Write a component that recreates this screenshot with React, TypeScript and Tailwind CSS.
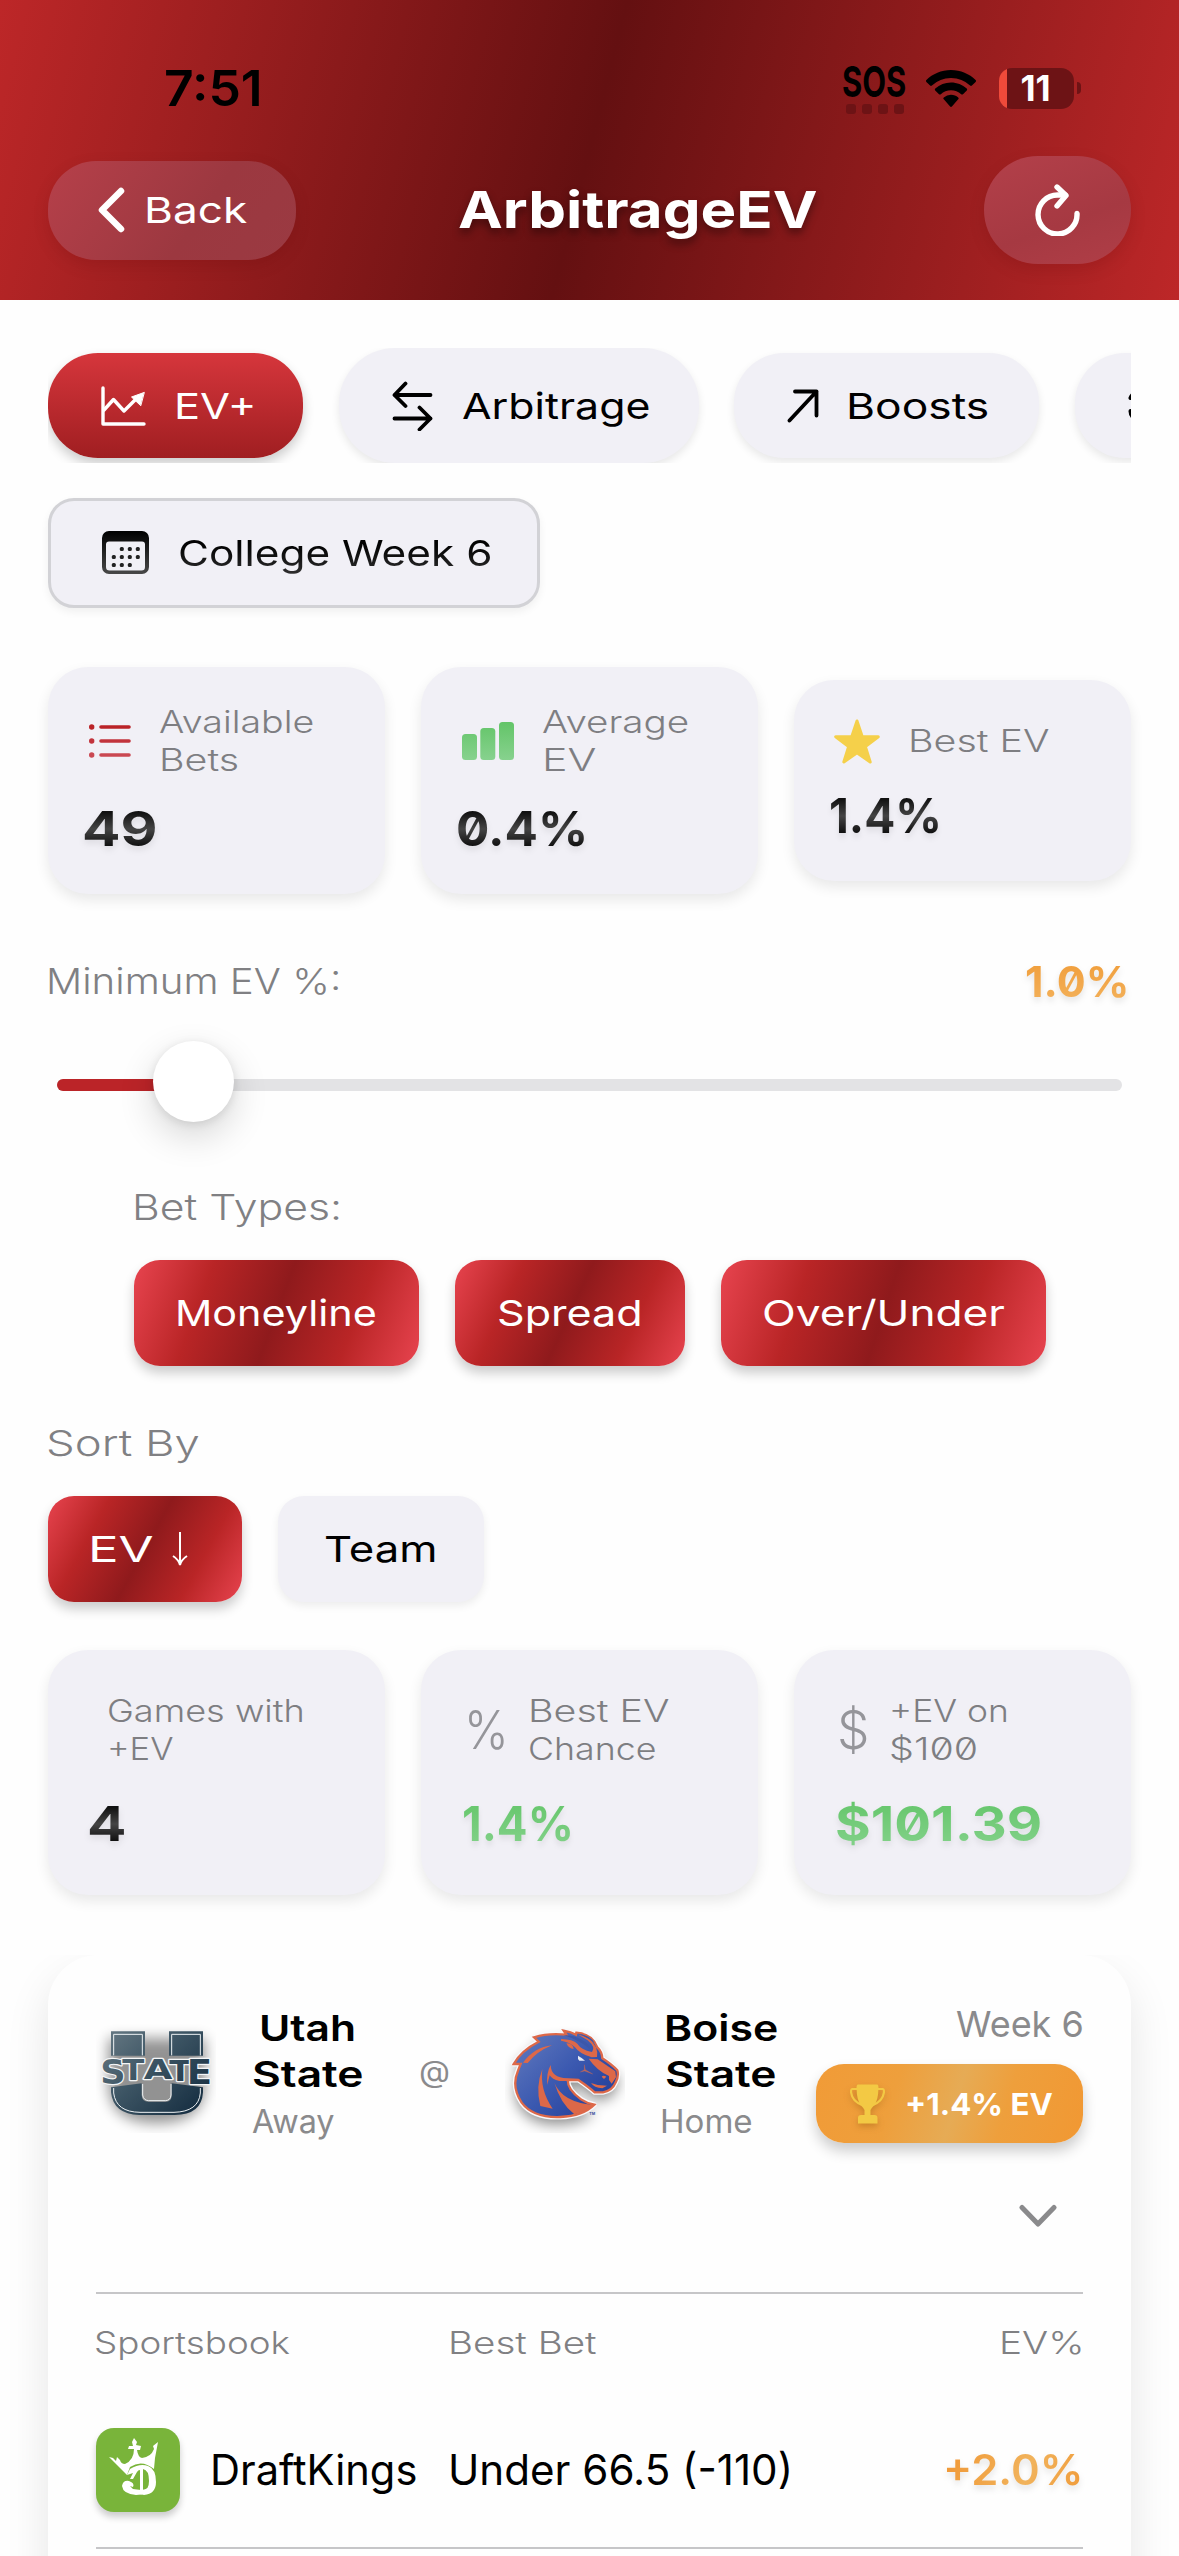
import React, { useLayoutEffect, useRef, useState } from "react";
import clsx from "clsx";

/* A single line of text stretched horizontally so that its glyphs fill the box;
   the extra pixels make up for the side bearings of the outer glyphs. */
function Wide({ box, text = "", children }: { box: string; text?: string; children: React.ReactNode }) {
  const outer = useRef<HTMLSpanElement>(null);
  const inner = useRef<HTMLSpanElement>(null);
  const [scale, setScale] = useState(1);
  useLayoutEffect(() => {
    if (outer.current && inner.current) {
      setScale((outer.current.offsetWidth + 3) / inner.current.offsetWidth);
    }
  }, []);
  return (
    <span ref={outer} className={clsx("block shrink-0 whitespace-nowrap", box)}>
      <span
        ref={inner}
        className={clsx("inline-block origin-left align-top", text)}
        style={{ transform: `translateX(-2px) scaleX(${scale})` }}
      >
        {children}
      </span>
    </span>
  );
}

function StatusBar() {
  return (
    <div className="flex h-[60px] items-center pl-[166px] pr-[98px] text-black">
      <Wide box="w-[96px] text-[50px] leading-[60px] font-semibold">7:51</Wide>
      <div className="ml-auto flex items-center">
        <div className="flex w-[61px] flex-col items-center">
          <Wide box="w-[61px] text-[43px] leading-[38px] font-bold">SOS</Wide>
          <div className="mt-[4px] flex gap-[6px]">
            {[0, 1, 2, 3].map((i) => (
              <span key={i} className="h-[10px] w-[10px] rounded-[3px] bg-[#6d1315]" />
            ))}
          </div>
        </div>
        <svg className="ml-[21px] h-[37px] w-[50px]" viewBox="0 0 50 37" fill="black">
          <path d="M25 0C34.600 0 43.400 3.800 49.600 10.100a1.300 1.300 0 0 1 0 1.800L45.900 15.600a1.300 1.300 0 0 1-1.800 0A27.500 27.500 0 0 0 25 8 27.500 27.500 0 0 0 5.900 15.600a1.300 1.300 0 0 1-1.800 0L.4 11.900a1.300 1.300 0 0 1 0-1.800C6.600 3.800 15.400 0 25 0z" />
          <path d="M25 12.500c6 0 11.500 2.300 15.700 6.100.6.500.6 1.300.1 1.900L37 24.200c-.5.500-1.300.5-1.800 0A15.400 15.400 0 0 0 25 20.300c-3.900 0-7.500 1.500-10.200 3.900-.5.500-1.300.5-1.800 0l-3.800-3.700c-.5-.6-.5-1.400.1-1.900A23.300 23.300 0 0 1 25 12.500z" />
          <path d="M25 24.800c2.800 0 5.300 1 7.200 2.700.6.500.6 1.300 0 1.800l-6.300 7.200c-.5.500-1.300.5-1.800 0l-6.300-7.200c-.6-.5-.6-1.300 0-1.800a10.800 10.800 0 0 1 7.200-2.700z" />
        </svg>
        <div className="ml-[23px] flex h-[41px] w-[75px] items-center justify-center overflow-hidden rounded-[13px] bg-[linear-gradient(90deg,#f04a3a_8px,#6d1315_8px)]">
          <span className="-ml-[2px] text-[35px] leading-[40px] font-bold text-white">11</span>
        </div>
        <span className="ml-[3px] h-[12px] w-[4px] rounded-r-full bg-[#6d1315]" />
      </div>
    </div>
  );
}

function Header() {
  return (
    <header className="h-[300px] bg-[linear-gradient(104.3deg,#bd2728_0%,#641011_50%,#bd2728_100%)] pt-[58px]">
      <StatusBar />
      <div className="mt-[38px] flex h-[108px] items-center justify-between px-[48px]">
        <div className="flex h-[99px] w-[248px] items-center rounded-[48px] bg-[linear-gradient(125deg,#b6404a,#9c3840_60%,#9a3a42)] pl-[50px] shadow-[0_6px_16px_rgba(80,0,0,0.15)]">
          <svg className="h-[46px] w-[27px]" viewBox="0 0 27 46" fill="none" stroke="white" strokeWidth="6.500" strokeLinecap="round" strokeLinejoin="round">
            <path d="M23 4 4 23l19 19" />
          </svg>
          <Wide box="ml-[21px] w-[100px] text-[36px] leading-[44px] text-white">Back</Wide>
        </div>
        <div className="pr-[32px]">
          <Wide box="ml-[-26px] w-[357px] text-[51px] leading-[60px] font-bold text-white" text="[text-shadow:0_5px_8px_rgba(0,0,0,0.4)]">
            ArbitrageEV
          </Wide>
        </div>
        <div className="-ml-[55px] flex h-[108px] w-[147px] items-center justify-center rounded-[54px] bg-[linear-gradient(160deg,#b3404a,#a63942_60%,#b03e47)] shadow-[0_6px_16px_rgba(80,0,0,0.15)]">
          <svg className="h-[52px] w-[46px]" viewBox="0 0 46 52" fill="none" stroke="white" strokeWidth="5.400" strokeLinecap="round" strokeLinejoin="round">
            <path d="M42 29.500a19.500 19.500 0 1 1-19.500-18.500h7.500" />
            <path d="m22 3 9 8.500-9 10.500" />
          </svg>
        </div>
      </div>
    </header>
  );
}

const pill = "flex shrink-0 items-center pl-[53px] text-[36px] leading-[44px]";

function Tabs() {
  return (
    <div className="mt-[48px] flex h-[115px] items-center gap-[35.500px] overflow-hidden">
      <div className={clsx(pill, "h-[105px] w-[255px] rounded-[50px] bg-gradient-to-b from-[#d6363c] to-[#a01e21] text-white shadow-[0_6px_12px_rgba(0,0,0,0.2)]")}>
        <svg className="h-[40px] w-[45px]" viewBox="0 0 45 40" fill="none" stroke="white" strokeWidth="3.400" strokeLinecap="round" strokeLinejoin="round">
          <path d="M2 2v36h41" />
          <path d="M3 24l9.500-10.500L23 25l13-13" />
          <path d="M43 6.500 30.500 11l9 8.500z" fill="white" strokeWidth="1" />
        </svg>
        <Wide box="ml-[30px] w-[79px]">EV+</Wide>
      </div>
      <div className={clsx(pill, "h-[115px] w-[360px] rounded-[56px] bg-[#f1f0f6] shadow-[0_4px_8px_rgba(0,0,0,0.09)]")}>
        <svg className="h-[50px] w-[41px]" viewBox="0 0 41 50" fill="none" stroke="black" strokeWidth="3.800" strokeLinecap="round" strokeLinejoin="round">
          <path d="M38.500 14H2.500M13.500 2.500 2.500 14l11 11" />
          <path d="M2.500 37.500h36M27.500 26.500l11 11-11 11" />
        </svg>
        <Wide box="ml-[31px] w-[185px]">Arbitrage</Wide>
      </div>
      <div className={clsx(pill, "h-[105px] w-[305px] rounded-[50px] bg-[#f1f0f6] shadow-[0_4px_8px_rgba(0,0,0,0.09)]")}>
        <svg className="h-[34px] w-[32px]" viewBox="0 0 32 34" fill="none" stroke="black" strokeWidth="3.800" strokeLinecap="round" strokeLinejoin="round">
          <path d="M2.500 31.500 29.500 2.500M8 2.500h21.500v24" />
        </svg>
        <Wide box="ml-[29px] w-[140px]">Boosts</Wide>
      </div>
      <div className={clsx(pill, "h-[105px] w-[300px] rounded-[50px] bg-[#f1f0f6] shadow-[0_4px_8px_rgba(0,0,0,0.09)]")}>
        <svg className="h-[34px] w-[26px]" viewBox="0 0 26 34" fill="none" stroke="black" strokeWidth="4" strokeLinecap="round">
          <path d="M2.500 9a8 8 0 0 1 10-5M2.500 22a8 8 0 0 0 10 8" />
        </svg>
      </div>
    </div>
  );
}

const calendarDots = [
  [21, 18], [29, 18], [37, 18],
  [13, 26], [21, 26], [29, 26], [37, 26],
  [13, 34], [21, 34], [29, 34],
];

function WeekButton() {
  return (
    <div className="mt-[35px] flex h-[110px] w-[492px] items-center rounded-[26px] border-[3px] border-[#d2d2d6] bg-[#f1f0f6] pb-[1px] pl-[51px] shadow-[0_4px_8px_rgba(0,0,0,0.06)]">
      <svg className="h-[44px] w-[47px]" viewBox="0 0 47 44">
        <defs>
          <linearGradient id="cal" x1="0" y1="0" x2="0" y2="1">
            <stop offset="0" stopColor="#000" />
            <stop offset="1" stopColor="#484848" />
          </linearGradient>
        </defs>
        <path fillRule="evenodd" fill="url(#cal)" d="M7 0h33a7 7 0 0 1 7 7v29a7 7 0 0 1-7 7H7a7 7 0 0 1-7-7V7a7 7 0 0 1 7-7zM7 10.500a3 3 0 0 0-3 3V36a3.500 3.500 0 0 0 3.500 3.500h32A3.500 3.500 0 0 0 43 36V13.500a3 3 0 0 0-3-3z" />
        {calendarDots.map(([x, y]) => (
          <rect key={`${x}-${y}`} x={x - 3.2} y={y - 2} width="4" height="4" rx="1.500" fill="#222" />
        ))}
      </svg>
      <Wide box="ml-[31px] w-[311px] text-[36px] leading-[46px]" text="bg-gradient-to-b from-black to-[#333] bg-clip-text text-transparent">
        College Week 6
      </Wide>
    </div>
  );
}

const card = "flex w-[337px] flex-col bg-[#f1f0f6] rounded-[40px] shadow-[0_6px_14px_rgba(0,0,0,0.09)]";
const darkValue = "bg-[linear-gradient(180deg,#111_20%,#444_50%,#111_80%)] bg-clip-text text-transparent drop-shadow-[0_4px_3px_rgba(0,0,0,0.08)]";
const greenValue = "bg-gradient-to-b from-[#62c568] to-[#85d28c] bg-clip-text text-transparent drop-shadow-[0_4px_3px_rgba(0,0,0,0.08)]";
const labelText = "text-[31px] leading-[38px] font-light text-[#7e7e82]";
const valueText = "text-[48px] leading-[56px] font-bold";

function SummaryCards() {
  return (
    <div className="mt-[59px] flex h-[227px] items-center gap-[36px]">
      <div className={clsx(card, "h-[227px] pt-[36px]")}>
        <div className="flex h-[76px] items-center pl-[41px]">
          <svg className="h-[36px] w-[42px]" viewBox="0 0 42 36" strokeLinecap="round" strokeWidth="3.600">
            <path d="M12 4h28" stroke="#ba2227" />
            <path d="M12 18h28" stroke="#c2333c" />
            <path d="M12 32h28" stroke="#ca4852" />
            <circle cx="2.700" cy="4" r="2.700" fill="#ba2227" />
            <circle cx="2.700" cy="18" r="2.700" fill="#c2333c" />
            <circle cx="2.700" cy="32" r="2.700" fill="#ca4852" />
          </svg>
          <div className={clsx("ml-[30px]", labelText)}>
            <Wide box="w-[152px]">Available</Wide>
            <Wide box="w-[77px]">Bets</Wide>
          </div>
        </div>
        <Wide box={clsx("ml-[36px] mt-[22px] w-[73px]", valueText)} text={darkValue}>49</Wide>
      </div>
      <div className={clsx(card, "h-[227px] pt-[36px]")}>
        <div className="flex h-[76px] items-center pl-[41px]">
          <svg className="h-[40px] w-[52px]" viewBox="0 0 52 40">
            <defs>
              <linearGradient id="bars" gradientUnits="userSpaceOnUse" x1="0" y1="0" x2="0" y2="40">
                <stop offset="0" stopColor="#62c467" />
                <stop offset="1" stopColor="#88d28f" />
              </linearGradient>
            </defs>
            <g fill="url(#bars)">
              <rect x="0" y="13" width="15" height="26" rx="3.500" />
              <rect x="18.300" y="7" width="15" height="32" rx="3.500" />
              <rect x="37" y="1" width="15" height="38" rx="3.500" />
            </g>
          </svg>
          <div className={clsx("ml-[30px]", labelText)}>
            <Wide box="w-[144px]">Average</Wide>
            <Wide box="w-[51px]">EV</Wide>
          </div>
        </div>
        <Wide box={clsx("ml-[37px] mt-[22px] w-[129px]", valueText)} text={clsx(darkValue, "slashed-zero")}>0.4%</Wide>
      </div>
      <div className={clsx(card, "h-[201px] pt-[29px]")}>
        <div className="flex h-[64px] items-center pl-[40px]">
          <svg className="h-[45px] w-[46px]" viewBox="0 0 46 45" fill="#f5d04a" stroke="#f5d04a" strokeWidth="3" strokeLinejoin="round">
            <path d="M23 2l5.200 15.500 16.100.2-12.900 9.900 4.800 15.400L23 33.700 9.800 43l4.800-15.400L1.700 17.700l16.100-.2z" />
          </svg>
          <Wide box={clsx("ml-[30px] w-[138px]", labelText)}>Best EV</Wide>
        </div>
        <Wide box={clsx("ml-[37px] mt-[15px] w-[110px] self-start", valueText)} text={darkValue}>1.4%</Wide>
      </div>
    </div>
  );
}

function MinimumSlider() {
  return (
    <>
      <div className="mt-[64px] flex h-[46px] items-center justify-between pr-[3px]">
        <Wide box="w-[292px] text-[36px] leading-[46px] font-light text-[#808083]">Minimum EV %:</Wide>
        <Wide box="w-[101px] text-[43px] leading-[50px] font-bold" text="slashed-zero bg-gradient-to-b from-[#f09c36] to-[#f3b25c] bg-clip-text text-transparent drop-shadow-[0_4px_3px_rgba(0,0,0,0.1)]">
          1.0%
        </Wide>
      </div>
      <div className="mt-[37px] flex h-[81px] items-center px-[9px]">
        <div className="mt-[6px] flex h-[12px] w-full items-center rounded-full bg-[#e3e3e5]">
          <div className="h-[12px] w-[110px] rounded-l-full bg-[#bb2428]" />
          <div className="-ml-[14px] -mt-[6px] h-[81px] w-[81px] rounded-full bg-white shadow-[0_14px_36px_rgba(0,0,0,0.16),0_2px_10px_rgba(0,0,0,0.1)]" />
        </div>
      </div>
    </>
  );
}

const shiny = "flex h-[106px] items-center justify-center rounded-[26px] text-[36px] leading-[46px] text-white shadow-[0_7px_12px_rgba(0,0,0,0.2)]";

function Filters() {
  return (
    <>
      <div className="mt-[63px] pl-[86px]">
        <Wide box="w-[207px] text-[36px] leading-[44px] font-light text-[#808083]">Bet Types:</Wide>
        <div className="mt-[31px] flex gap-[36px]">
          <div className={clsx(shiny, "w-[285px] bg-[linear-gradient(110.400deg,#e8444f_0%,#b92526_25%,#8f1a1c_50%,#b92526_75%,#e8444f_100%)]")}>
            <Wide box="w-[199px]">Moneyline</Wide>
          </div>
          <div className={clsx(shiny, "w-[230px] bg-[linear-gradient(114.700deg,#e8444f_0%,#b92526_25%,#8f1a1c_50%,#b92526_75%,#e8444f_100%)]")}>
            <Wide box="w-[143px]">Spread</Wide>
          </div>
          <div className={clsx(shiny, "w-[325px] bg-[linear-gradient(108deg,#e8444f_0%,#b92526_25%,#8f1a1c_50%,#b92526_75%,#e8444f_100%)]")}>
            <Wide box="w-[240px]">Over/Under</Wide>
          </div>
        </div>
      </div>
      <Wide box="mt-[55px] w-[151px] text-[36px] leading-[44px] font-light text-[#808083]">Sort By</Wide>
      <div className="mt-[31px] flex gap-[36px]">
        <div className={clsx(shiny, "w-[194px] pr-[12px] bg-[linear-gradient(118.600deg,#e8444f_0%,#b92526_25%,#8f1a1c_50%,#b92526_75%,#e8444f_100%)]")}>
          <Wide box="w-[62px]">EV</Wide>
          <svg className="ml-[20px] h-[34px] w-[16px]" viewBox="0 0 16 34" fill="none" stroke="white" strokeWidth="2">
            <path d="M8 0v32M1 24c3 2 6 5 7 9 1-4 4-7 7-9" />
          </svg>
        </div>
        <div className="flex h-[106px] w-[206px] items-center justify-center rounded-[26px] bg-[#f1f0f6] text-[36px] leading-[46px] shadow-[0_4px_8px_rgba(0,0,0,0.07)]">
          <Wide box="w-[111px]">Team</Wide>
        </div>
      </div>
    </>
  );
}

const symbol = "text-[53px] leading-[60px] font-light text-[#95959a]";

function ResultCards() {
  return (
    <div className="mt-[48px] flex gap-[36px]">
      <div className={clsx(card, "h-[245px] pt-[42px]")}>
        <div className={clsx("h-[76px] pl-[61px]", labelText)}>
          <Wide box="w-[195px]">Games with</Wide>
          <Wide box="w-[64px]">+EV</Wide>
        </div>
        <Wide box={clsx("ml-[41px] mt-[28px] w-[36px]", valueText)} text={darkValue}>4</Wide>
      </div>
      <div className={clsx(card, "h-[245px] pt-[42px]")}>
        <div className="flex h-[76px] items-center pl-[45px]">
          <Wide box={clsx("w-[42px]", symbol)}>%</Wide>
          <div className={clsx("ml-[22px]", labelText)}>
            <Wide box="w-[138px]">Best EV</Wide>
            <Wide box="w-[125px]">Chance</Wide>
          </div>
        </div>
        <Wide box={clsx("ml-[43px] mt-[28px] w-[109px]", valueText)} text={greenValue}>1.4%</Wide>
      </div>
      <div className={clsx(card, "h-[245px] pt-[42px]")}>
        <div className="flex h-[76px] items-center pl-[45px]">
          <Wide box={clsx("w-[30px]", symbol)}>$</Wide>
          <div className={clsx("ml-[22px]", labelText)}>
            <Wide box="w-[117px]">+EV on</Wide>
            <Wide box="w-[86px]" text="slashed-zero">$100</Wide>
          </div>
        </div>
        <Wide box={clsx("ml-[43px] mt-[28px] w-[204px]", valueText)} text={clsx(greenValue, "slashed-zero")}>$101.39</Wide>
      </div>
    </div>
  );
}

function UtahStateLogo() {
  return (
    <svg className="mt-[8px] h-[120px] w-[120px] shrink-0" viewBox="48 9 360 360">
      <defs>
        <linearGradient id="navy" gradientUnits="userSpaceOnUse" x1="90" y1="60" x2="340" y2="310">
          <stop offset="0" stopColor="#647782" />
          <stop offset="0.450" stopColor="#3d5564" />
          <stop offset="1" stopColor="#172f42" />
        </linearGradient>
        <filter id="soft" x="-30%" y="-30%" width="160%" height="160%">
          <feGaussianBlur stdDeviation="20" />
        </filter>
      </defs>
      <path filter="url(#soft)" opacity="0.420" d="M85 85h290v150q-8 105-145 105Q95 340 85 235z" />
      <g fill="url(#navy)">
        <path d="M93 64h102v73H93zM267 64h102v73H267z" />
        <path d="M93 232l92-12v35q1 20 20 20h53q17 0 17-20v-35l94 12v15q-4 68-85 68H178q-78-2-85-68z" />
      </g>
      <g fill="none" stroke="#eef2f4" strokeWidth="3">
        <path d="M101 136V73h86v63M275 136V73h86v63" />
        <path d="M101 234v15q7 57 79 58h102q74-2 79-58v-15M188 222v33q2 16 18 17h50q16-1 17-17v-33" />
      </g>
      <g fontFamily="DejaVu Sans" fontWeight="700" textAnchor="middle" stroke="#f4f6f7" strokeWidth="7" paintOrder="stroke" strokeLinejoin="round" fill="url(#navy)">
        <text x="99" y="222" fontSize="100" textLength="76" lengthAdjust="spacingAndGlyphs">S</text>
        <text x="160" y="210" fontSize="84" textLength="66" lengthAdjust="spacingAndGlyphs">T</text>
        <text x="234" y="207" fontSize="80" textLength="86" lengthAdjust="spacingAndGlyphs">A</text>
        <text x="301" y="212" fontSize="86" textLength="66" lengthAdjust="spacingAndGlyphs">T</text>
        <text x="358" y="223" fontSize="102" textLength="76" lengthAdjust="spacingAndGlyphs">E</text>
      </g>
    </svg>
  );
}

function BoiseStateLogo() {
  return (
    <svg className="ml-[56px] mt-[8px] h-[120px] w-[120px] shrink-0" viewBox="24 9 360 360">
      <defs>
        <linearGradient id="royal" gradientUnits="userSpaceOnUse" x1="90" y1="90" x2="300" y2="300">
          <stop offset="0" stopColor="#5b74bb" />
          <stop offset="0.500" stopColor="#3b59b0" />
          <stop offset="1" stopColor="#26409a" />
        </linearGradient>
        <path id="horse" d="M50 162Q72 122 125 95L111 82Q155 68 208 74L200 62Q222 66 237 74L238 68Q286 72 301 112Q315 125 316 145Q345 164 361 181Q366 198 356 217Q346 242 318 247L293 247Q276 232 244 210L212 210Q212 240 252 268Q268 279 292 284Q258 318 190 321Q108 324 74 278Q42 230 63 182L71 162Z" />
      </defs>
      <use href="#horse" filter="url(#soft)" opacity="0.450" y="22" />
      <use href="#horse" fill="#fff" stroke="#f8f8fb" strokeWidth="15" strokeLinejoin="round" />
      <use href="#horse" fill="url(#royal)" stroke="#dd6848" strokeWidth="7" strokeLinejoin="miter" />
      <g fill="#dd6848">
        <path d="M78 158Q112 112 165 106Q120 124 92 159z" />
        <path d="M136 177Q128 240 167 296L130 288Q115 230 136 177z" />
        <path d="M161 165Q162 204 211 205L246 207L237 213L187 213Q165 208 158 196Q154 210 151 225Q147 190 161 165z" />
        <path d="M172 218Q195 276 290 285Q263 308 232 313Q190 280 172 218z" />
        <path d="M192 87Q228 88 241 101Q252 119 285 126Q297 112 272 91L244 74Q280 78 297 112Q303 127 300 141L284 142Q248 132 234 112Q218 96 192 92z" />
        <path d="M208 100q20 0 22 17q-15-1-22-17zM275 146L302 148L355 184L357 202L344 221L336 210V198Q300 182 275 146zM282 219l20 6 28 2-14 8q-25-2-34-16z" />
        <path d="M314 200q5-6 14 0l-7 7z" />
      </g>
      <path d="M200 75Q264 78 286 122Q249 91 200 75zM239 70Q282 76 294 101Q273 82 239 70z" fill="#3c57a9" />
      <path d="M262 164v15l-12 7 13-3 24 9-22-13z" fill="#c06759" stroke="#c06759" strokeWidth="1" />
      <path d="M243 137q13 7 21 15h-17q-6-5-4-15z" fill="#e6eaf4" />
      <text x="277" y="315" fontFamily="Inter" fontWeight="700" fontSize="11" fill="#3a4f9f">TM</text>
    </svg>
  );
}

function GameCard() {
  return (
    <div className="-mx-[48px] mt-[60px] h-[601px] overflow-hidden px-[48px]">
      <section className="h-[700px] rounded-[50px] bg-[#fefefe] px-[48px] pt-[50px] shadow-[0_20px_44px_rgba(0,0,0,0.1)]">
        <div className="flex h-[150px] items-start">
          <UtahStateLogo />
          <div className="ml-[38px] w-[108px]">
            <div className="flex flex-col items-center text-[36px] leading-[46px] font-semibold">
              <Wide box="w-[94px]">Utah</Wide>
              <Wide box="w-[109px]">State</Wide>
            </div>
            <Wide box="mt-[2px] w-[80px] text-[32px] leading-[46px] text-[#8a8a8c]">Away</Wide>
          </div>
          <Wide box="ml-[59px] mt-[43px] w-[28px] text-[30px] leading-[46px] text-[#8a8a8c]">@</Wide>
          <BoiseStateLogo />
          <div className="ml-[37px] w-[115px]">
            <div className="flex flex-col items-center pl-[4px] text-[36px] leading-[46px] font-semibold">
              <Wide box="w-[111px]">Boise</Wide>
              <Wide box="w-[109px]">State</Wide>
            </div>
            <Wide box="mt-[2px] w-[90px] text-[32px] leading-[46px] text-[#8a8a8c]">Home</Wide>
          </div>
          <div className="-mt-[4px] ml-auto flex flex-col items-end">
            <Wide box="w-[125px] text-[36px] leading-[46px] text-[#8a8a8c]">Week 6</Wide>
            <div className="mt-[17px] flex h-[79px] w-[267px] items-center rounded-[28px] bg-[linear-gradient(106.500deg,#f19b37_0%,#ee9f3c_30%,#e6ab55_52%,#ee9f3c_70%,#f19833_100%)] pl-[34px] shadow-[0_8px_14px_rgba(0,0,0,0.2)]">
              <svg className="h-[40px] w-[35px] drop-shadow-[0_3px_3px_rgba(120,70,0,0.3)]" viewBox="0 0 35 40" fill="#f3c944">
                <path d="M8 .5h19q1.500 0 1.500 3.500-.3 12-4 17-3 3-4 5v5h4q3 0 3 3v5.500H8V34q0-3 3-3h3.500v-5q-1-2-4-5-3.700-5-4-17Q6.500.5 8 .5z" />
                <path d="M7 5H2q-1 0-1 3 1 9 11 13M28 5h5q1 0 1 3-1 9-11 13" fill="none" stroke="#f3c944" strokeWidth="2.200" />
              </svg>
              <Wide box="ml-[22px] w-[145px] text-[30px] leading-[40px] font-bold text-white">+1.4% EV</Wide>
            </div>
          </div>
        </div>
        <div className="mt-[49px] flex h-[26px] justify-end pr-[26px]">
          <svg className="h-[24px] w-[38px]" viewBox="0 0 38 24" fill="none" stroke="#8a8a8c" strokeWidth="5" strokeLinecap="round" strokeLinejoin="round">
            <path d="M3 3.500 19 20 35 3.500" />
          </svg>
        </div>
        <div className="mt-[62px] h-[2px] bg-[#c6c6c8]" />
        <div className="mt-[28px] flex h-[42px] items-center text-[31px] leading-[42px] font-light text-[#808083]">
          <Wide box="w-[193px]">Sportsbook</Wide>
          <Wide box="ml-[161px] w-[145px]">Best Bet</Wide>
          <Wide box="ml-auto w-[82px]">EV%</Wide>
        </div>
        <div className="mt-[64px] flex h-[84px] items-center text-[42px] leading-[52px]">
          <svg className="h-[84px] w-[84px] rounded-[18px] bg-[#79b43a] shadow-[0_5px_7px_rgba(0,0,0,0.2)]" viewBox="0 0 84 84" fill="white">
            <path d="M13 29l4 1 3 3 1-4 3 3q1 4 5 4 9-4 9-15l-6 0 1-3 4 0-1-4 2-4 3 4-1 3 5 1-1 4-3 0q1 7 5 8 9-1 12-9l-1-3 5-4-3 16-1 11q-12-10-24-2l-3 8z" />
            <path d="M34 41q10-6 18-3 8 3 8 16 0 12-12 13l-8-2 0-2 4-1V42q-2 0-3 2l-4 7-3 0 3-6-6 2zM47 41v21q6 0 6-9 0-11-6-12z" fillRule="evenodd" />
            <path d="M33 53q-6-1-7 5 1 8 14 9 12 0 17-10l0-3Q53 62 45 62l-8-1-3-3 3 1q2-4-4-6z" />
          </svg>
          <Wide box="-mt-[1px] ml-[32px] w-[204px]">DraftKings</Wide>
          <Wide box="-mt-[1px] ml-[34px] w-[342px]">Under 66.5 (-110)</Wide>
          <Wide box="-mt-[1px] ml-auto mr-[1px] w-[137px] font-semibold" text="bg-[linear-gradient(110deg,#f09633,#f1b35c_60%,#f09a38)] bg-clip-text text-transparent drop-shadow-[0_4px_3px_rgba(0,0,0,0.1)]">
            +2.0%
          </Wide>
        </div>
        <div className="mt-[35px] h-[2px] bg-[#c6c6c8]" />
      </section>
    </div>
  );
}

export default function App() {
  return (
    <div className="h-[2556px] w-[1179px] overflow-hidden bg-[#fefefe] font-['Inter',sans-serif] text-black">
      <Header />
      <main className="px-[48px]">
        <Tabs />
        <WeekButton />
        <SummaryCards />
        <MinimumSlider />
        <Filters />
        <ResultCards />
        <GameCard />
      </main>
    </div>
  );
}
